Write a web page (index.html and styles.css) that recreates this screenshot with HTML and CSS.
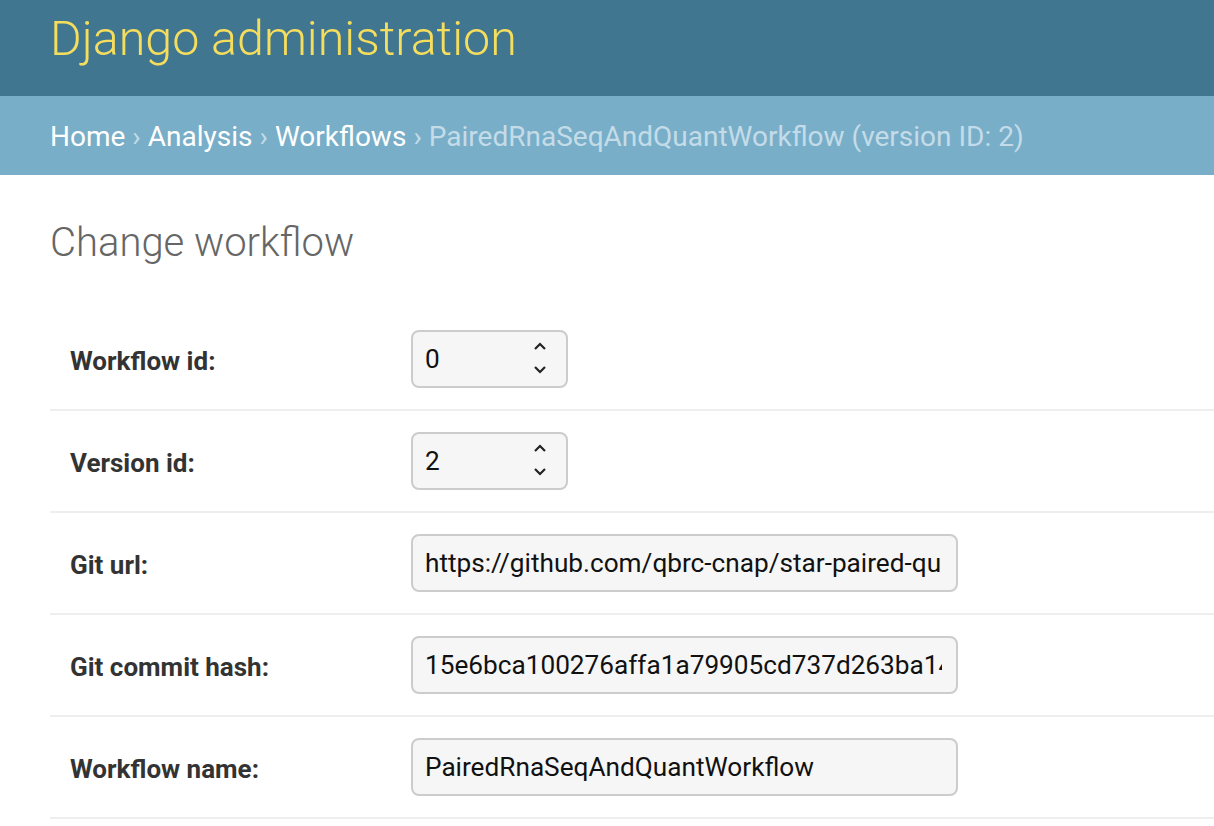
FILE: index.html
```html
<!DOCTYPE html>
<html lang="en">
<head>
<meta charset="utf-8">
<title>Change workflow | Django site admin</title>
<link rel="stylesheet" href="styles.css">
</head>
<body>
<header class="header">
  <h1 class="branding">Django administration</h1>
</header>
<nav class="breadcrumbs">
  <a href="#">Home</a><span class="sep">›</span><a href="#">Analysis</a><span class="sep">›</span><a href="#">Workflows</a><span class="sep">›</span><span class="current">PairedRnaSeqAndQuantWorkflow (version ID: 2)</span>
</nav>
<main class="content">
  <h1 class="page-title">Change workflow</h1>
  <form class="form">
    <div class="row">
      <label class="label" for="wid">Workflow id:</label>
      <div class="num-wrap">
        <input class="input num" id="wid" type="number" value="0">
        <svg class="spin" width="14" height="34" viewBox="0 0 14 34"><path d="M2 8 L7 3 L12 8" /><path d="M2 26 L7 31 L12 26" /></svg>
      </div>
    </div>
    <div class="row">
      <label class="label" for="vid">Version id:</label>
      <div class="num-wrap">
        <input class="input num" id="vid" type="number" value="2">
        <svg class="spin" width="14" height="34" viewBox="0 0 14 34"><path d="M2 8 L7 3 L12 8" /><path d="M2 26 L7 31 L12 26" /></svg>
      </div>
    </div>
    <div class="row">
      <label class="label" for="git">Git url:</label>
      <input class="input text" id="git" type="text" value="https://github.com/qbrc-cnap/star-paired-quant-workflow">
    </div>
    <div class="row">
      <label class="label" for="hash">Git commit hash:</label>
      <input class="input text" id="hash" type="text" value="15e6bca100276affa1a79905cd737d263ba14c5e">
    </div>
    <div class="row">
      <label class="label" for="name">Workflow name:</label>
      <input class="input text" id="name" type="text" value="PairedRnaSeqAndQuantWorkflow">
    </div>
  </form>
</main>
</body>
</html>
```

FILE: styles.css
```css
html, body {
  margin: 0;
  padding: 0;
  background: #fff;
  font-family: Roboto, "Liberation Sans", sans-serif;
  color: #333;
  overflow: hidden;
}

.header {
  box-sizing: border-box;
  height: 96px;
  background: #417690;
  padding: 11px 50px 0;
}

.branding {
  margin: 0;
  font-size: 48.4px;
  line-height: 56px;
  font-weight: 300;
  color: #f5dd5d;
}

.breadcrumbs {
  box-sizing: border-box;
  height: 79px;
  background: #79aec8;
  padding: 24px 50px 0;
  font-size: 28px;
  line-height: 34px;
  font-weight: 400;
  color: #c4dce8;
  white-space: nowrap;
}

.breadcrumbs a {
  color: #fff;
  text-decoration: none;
}

.sep {
  padding: 0 7px;
  color: #c4dce8;
}

.current {
  color: #c4dce8;
}

.content {
  padding: 44px 0 0 50px;
}

.page-title {
  margin: 0 0 42px;
  font-size: 40px;
  line-height: 48px;
  font-weight: 300;
  color: #666;
}

.row {
  display: flex;
  align-items: center;
  padding: 21px 0 21px 20px;
  border-bottom: 2px solid #eee;
}

.label {
  flex: 0 0 341px;
  padding-top: 3px;
  font-size: 26px;
  font-weight: 700;
  color: #333;
}

.input {
  box-sizing: border-box;
  height: 58px;
  margin: 0;
  border: 2px solid #ccc;
  border-radius: 8px;
  background: #f6f6f6;
  padding: 0 14px 0 12px;
  font-family: Roboto, "Liberation Sans", sans-serif;
  font-size: 26.2px;
  color: #111;
  outline: none;
}

.num-wrap {
  position: relative;
  display: flex;
}

.num {
  width: 157px;
  -moz-appearance: textfield;
}

.num::-webkit-inner-spin-button,
.num::-webkit-outer-spin-button {
  -webkit-appearance: none;
  margin: 0;
}

.spin {
  position: absolute;
  left: 122px;
  top: 11px;
  fill: none;
  stroke: #222;
  stroke-width: 2.2;
}

.text {
  width: 547px;
}
```
